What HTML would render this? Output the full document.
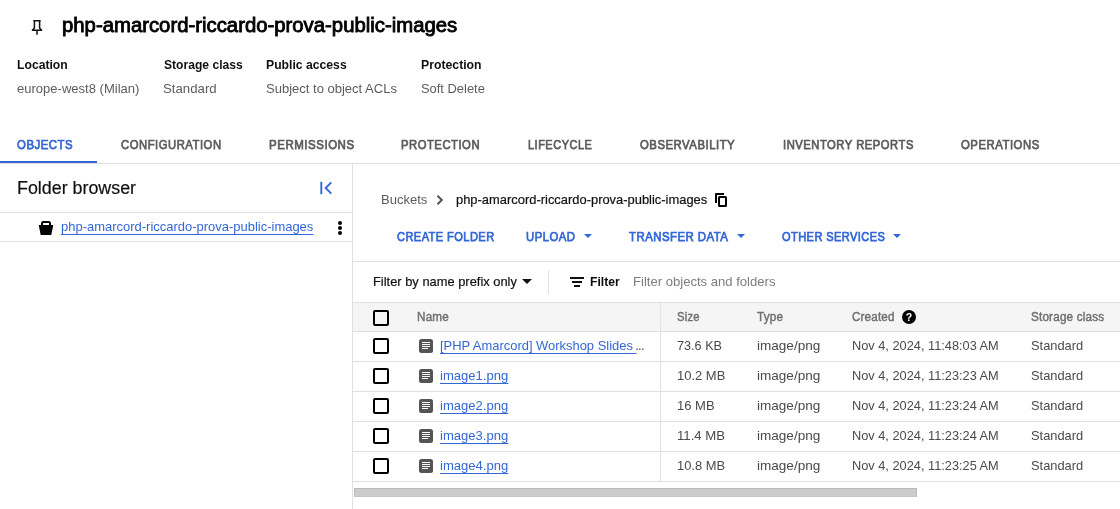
<!DOCTYPE html>
<html><head><meta charset="utf-8">
<style>
*{box-sizing:border-box;margin:0;padding:0}
html,body{width:1120px;height:509px;overflow:hidden;background:#fff}
body{font-family:"Liberation Sans",sans-serif;font-size:13px;color:#202124;position:relative}
.a{position:absolute;white-space:nowrap;line-height:1;transform-origin:0 50%}
.b{font-weight:bold}
.m{-webkit-text-stroke:0.85px currentColor}
.m2{-webkit-text-stroke:0.75px currentColor}
.m3{-webkit-text-stroke:0.45px currentColor}
.m4{-webkit-text-stroke:0.2px currentColor}
.ln{position:absolute;background:#e0e0e0}
.u{text-decoration:underline;text-decoration-thickness:1px;text-underline-offset:3px}
.cb{position:absolute;left:373px;width:16px;height:16px;border:2px solid #000;border-radius:2px}
svg{position:absolute;overflow:visible}
</style></head><body><div style="position:absolute;left:0;top:0;width:1120px;height:509px;will-change:transform">
<!-- pin -->
<svg style="left:30px;top:18px" width="14" height="18" viewBox="0 0 14 18"><path d="M3.300 2.800h7.400M4.400 2.800V10L2.400 12.300H11.600L9.600 10V2.800M7 12.300V16.800" fill="none" stroke="#111" stroke-width="1.500" stroke-linejoin="round"/></svg>

<!-- tabs lines -->
<div class="ln" style="left:0;top:163px;width:1120px;height:1px"></div>
<div class="ln" style="left:0;top:161px;width:97px;height:2px;background:#3367d6"></div>

<!-- folder browser -->
<svg style="left:319px;top:181px" width="14" height="14" viewBox="0 0 14 14"><path d="M2.300 0.700v12.600M12.300 1.300L6.600 7l5.700 5.700" fill="none" stroke="#3367d6" stroke-width="1.900"/></svg>
<div class="ln" style="left:0;top:212px;width:352px;height:1px"></div>
<svg style="left:38px;top:220px" width="16" height="16" viewBox="0 0 16 16"><path d="M4 6V3.300Q4 2 5.300 2H10.700Q12 2 12 3.300V6" fill="none" stroke="#000" stroke-width="2"/><path d="M1.200 4.900H14.800Q15.300 4.900 15.200 5.400L13.400 14.400Q13.300 15 12.700 15H3.300Q2.700 15 2.600 14.400L0.800 5.400Q0.700 4.900 1.200 4.900Z" fill="#000"/></svg>
<svg style="left:338px;top:221px" width="4" height="14" viewBox="0 0 4 14"><circle cx="2" cy="2.100" r="2"/><circle cx="2" cy="7" r="2"/><circle cx="2" cy="11.900" r="2"/></svg>
<div class="ln" style="left:0;top:241px;width:352px;height:1px"></div>
<div class="ln" style="left:352px;top:164px;width:1px;height:345px"></div>

<!-- breadcrumb -->
<svg style="left:436px;top:195px" width="8" height="10" viewBox="0 0 8 10"><path d="M1.500 0.700L5.800 5l-4.300 4.300" fill="none" stroke="#555" stroke-width="2"/></svg>
<svg style="left:715px;top:193px" width="12" height="14" viewBox="0 0 12 14"><path d="M1 10V1h8" fill="none" stroke="#000" stroke-width="2" stroke-linejoin="round"/><rect x="4" y="4" width="7" height="9" rx="0.500" fill="none" stroke="#000" stroke-width="2" stroke-linejoin="round"/></svg>

<!-- action carets -->
<svg style="left:584px;top:234px" width="8" height="4" viewBox="0 0 8 4"><path d="M0 0h8L4 4z" fill="#3367d6"/></svg>
<svg style="left:737px;top:234px" width="8" height="4" viewBox="0 0 8 4"><path d="M0 0h8L4 4z" fill="#3367d6"/></svg>
<svg style="left:893px;top:234px" width="8" height="4" viewBox="0 0 8 4"><path d="M0 0h8L4 4z" fill="#3367d6"/></svg>
<div class="ln" style="left:353px;top:261px;width:767px;height:1px"></div>

<!-- filter -->
<svg style="left:522px;top:279px" width="10" height="5" viewBox="0 0 10 5"><path d="M0 0h10L5 5z" fill="#111"/></svg>
<div class="ln" style="left:548px;top:270px;width:1px;height:24px"></div>
<svg style="left:570px;top:277px" width="14" height="10" viewBox="0 0 14 10"><rect x="0" y="0" width="14" height="2" fill="#111"/><rect x="2" y="4" width="10" height="2" fill="#111"/><rect x="4" y="8" width="6" height="2" fill="#111"/></svg>

<!-- table -->
<div style="position:absolute;left:353px;top:302px;width:767px;height:29px;background:#f5f5f5"></div>
<div class="ln" style="left:353px;top:302px;width:767px;height:1px"></div>
<div class="ln" style="left:353px;top:331px;width:767px;height:1px"></div>
<div class="ln" style="left:353px;top:361px;width:767px;height:1px"></div>
<div class="ln" style="left:353px;top:391px;width:767px;height:1px"></div>
<div class="ln" style="left:353px;top:421px;width:767px;height:1px"></div>
<div class="ln" style="left:353px;top:451px;width:767px;height:1px"></div>
<div class="ln" style="left:353px;top:481px;width:767px;height:1px"></div>
<div class="ln" style="left:660px;top:302px;width:1px;height:179px"></div>

<div class="cb" style="top:310px"></div>
<div class="cb" style="top:338px"></div>
<div class="cb" style="top:368px"></div>
<div class="cb" style="top:398px"></div>
<div class="cb" style="top:428px"></div>
<div class="cb" style="top:458px"></div>

<svg style="left:419px;top:339px" width="14" height="14" viewBox="0 0 14 14"><rect width="14" height="14" rx="2.500" fill="#555"/><path d="M3 3.500h8M3 5.500h8M3 7.500h8M3 9.500h6" stroke="#fff" stroke-width="1.100" fill="none"/></svg>
<svg style="left:419px;top:369px" width="14" height="14" viewBox="0 0 14 14"><rect width="14" height="14" rx="2.500" fill="#555"/><path d="M3 3.500h8M3 5.500h8M3 7.500h8M3 9.500h6" stroke="#fff" stroke-width="1.100" fill="none"/></svg>
<svg style="left:419px;top:399px" width="14" height="14" viewBox="0 0 14 14"><rect width="14" height="14" rx="2.500" fill="#555"/><path d="M3 3.500h8M3 5.500h8M3 7.500h8M3 9.500h6" stroke="#fff" stroke-width="1.100" fill="none"/></svg>
<svg style="left:419px;top:429px" width="14" height="14" viewBox="0 0 14 14"><rect width="14" height="14" rx="2.500" fill="#555"/><path d="M3 3.500h8M3 5.500h8M3 7.500h8M3 9.500h6" stroke="#fff" stroke-width="1.100" fill="none"/></svg>
<svg style="left:419px;top:459px" width="14" height="14" viewBox="0 0 14 14"><rect width="14" height="14" rx="2.500" fill="#555"/><path d="M3 3.500h8M3 5.500h8M3 7.500h8M3 9.500h6" stroke="#fff" stroke-width="1.100" fill="none"/></svg>

<!-- help icon -->
<svg style="left:902px;top:310px" width="14" height="14" viewBox="0 0 14 14"><circle cx="7" cy="7" r="7" fill="#000"/><text x="7" y="10.800" font-size="10.500" font-weight="bold" fill="#fff" text-anchor="middle" font-family="Liberation Sans, sans-serif">?</text></svg>

<!-- scrollbar -->
<div style="position:absolute;left:354px;top:488px;width:563px;height:9px;background:#ccc;border:1px solid #b8b8b8;border-bottom-color:#c6c6c6"></div>

<!-- ellipsis -->
<div class="a" style="left:635.3px;top:339px;font-size:13px;color:#4a4a4a;letter-spacing:-0.8px">...</div>

<div class="a m" id="title" style="left:61.7px;top:15px;font-size:20px;color:#000;transform:scaleX(1.0158);">php-amarcord-riccardo-prova-public-images</div>
<div class="a b" id="l1" style="left:16.5px;top:58px;font-size:13px;color:#111;transform:scaleX(0.9371);">Location</div>
<div class="a b" id="l2" style="left:163.7px;top:58px;font-size:13px;color:#111;transform:scaleX(0.9312);">Storage class</div>
<div class="a b" id="l3" style="left:265.6px;top:58px;font-size:13px;color:#111;transform:scaleX(0.9381);">Public access</div>
<div class="a b" id="l4" style="left:420.7px;top:58px;font-size:13px;color:#111;transform:scaleX(0.9425);">Protection</div>
<div class="a" id="v1" style="left:16.5px;top:82px;font-size:13px;color:#5c5c5c;transform:scaleX(1.0026);">europe-west8 (Milan)</div>
<div class="a" id="v2" style="left:162.6px;top:82px;font-size:13px;color:#5c5c5c;transform:scaleX(1.0164);">Standard</div>
<div class="a" id="v3" style="left:265.6px;top:82px;font-size:13px;color:#5c5c5c;transform:scaleX(1.0010);">Subject to object ACLs</div>
<div class="a" id="v4" style="left:420.6px;top:82px;font-size:13px;color:#5c5c5c;transform:scaleX(0.9922);">Soft Delete</div>
<div class="a m2" id="t0" style="left:16.5px;top:138px;font-size:13px;color:#3367d6;letter-spacing:0.60px;transform:scaleX(0.8756);">OBJECTS</div>
<div class="a m2" id="t1" style="left:120.5px;top:138px;font-size:13px;color:#5c5c5c;letter-spacing:0.60px;transform:scaleX(0.8677);">CONFIGURATION</div>
<div class="a m2" id="t2" style="left:268.5px;top:138px;font-size:13px;color:#5c5c5c;letter-spacing:0.60px;transform:scaleX(0.8836);">PERMISSIONS</div>
<div class="a m2" id="t3" style="left:400.6px;top:138px;font-size:13px;color:#5c5c5c;letter-spacing:0.60px;transform:scaleX(0.8664);">PROTECTION</div>
<div class="a m2" id="t4" style="left:527.5px;top:138px;font-size:13px;color:#5c5c5c;letter-spacing:0.60px;transform:scaleX(0.8440);">LIFECYCLE</div>
<div class="a m2" id="t5" style="left:639.5px;top:138px;font-size:13px;color:#5c5c5c;letter-spacing:0.60px;transform:scaleX(0.8718);">OBSERVABILITY</div>
<div class="a m2" id="t6" style="left:782.5px;top:138px;font-size:13px;color:#5c5c5c;letter-spacing:0.60px;transform:scaleX(0.8636);">INVENTORY REPORTS</div>
<div class="a m2" id="t7" style="left:960.5px;top:138px;font-size:13px;color:#5c5c5c;letter-spacing:0.60px;transform:scaleX(0.8721);">OPERATIONS</div>
<div class="a m4" id="fb" style="left:16.7px;top:179px;font-size:18px;color:#111;transform:scaleX(0.9919);">Folder browser</div>
<div class="a u" id="fl" style="left:60.5px;top:220px;font-size:13px;color:#3367d6;transform:scaleX(0.9978);">php-amarcord-riccardo-prova-public-images</div>
<div class="a" id="bc1" style="left:380.5px;top:193px;font-size:13px;color:#5c5c5c;transform:scaleX(1.0022);">Buckets</div>
<div class="a m4" id="bc2" style="left:455.6px;top:193px;font-size:13px;color:#111;transform:scaleX(0.9936);">php-amarcord-riccardo-prova-public-images</div>
<div class="a m2" id="a1" style="left:396.7px;top:230px;font-size:13px;color:#3367d6;letter-spacing:0.50px;transform:scaleX(0.8512);">CREATE FOLDER</div>
<div class="a m2" id="a2" style="left:525.6px;top:230px;font-size:13px;color:#3367d6;letter-spacing:0.50px;transform:scaleX(0.8728);">UPLOAD</div>
<div class="a m2" id="a3" style="left:628.7px;top:230px;font-size:13px;color:#3367d6;letter-spacing:0.50px;transform:scaleX(0.8806);">TRANSFER DATA</div>
<div class="a m2" id="a4" style="left:781.6px;top:230px;font-size:13px;color:#3367d6;letter-spacing:0.50px;transform:scaleX(0.8496);">OTHER SERVICES</div>
<div class="a m4" id="f1" style="left:372.7px;top:275px;font-size:13px;color:#111;transform:scaleX(0.9910);">Filter by name prefix only</div>
<div class="a b" id="f2" style="left:589.7px;top:275px;font-size:13px;color:#0a0a0a;transform:scaleX(0.9337);">Filter</div>
<div class="a" id="f3" style="left:632.6px;top:275px;font-size:13px;color:#7d7d7d;transform:scaleX(1.0058);">Filter objects and folders</div>
<div class="a m3" id="h1" style="left:416.5px;top:311px;font-size:12px;color:#707070;letter-spacing:0.20px;transform:scaleX(0.9731);">Name</div>
<div class="a m3" id="h2" style="left:676.7px;top:311px;font-size:12px;color:#707070;letter-spacing:0.20px;transform:scaleX(0.9378);">Size</div>
<div class="a m3" id="h3" style="left:756.5px;top:311px;font-size:12px;color:#707070;letter-spacing:0.20px;transform:scaleX(0.9718);">Type</div>
<div class="a m3" id="h4" style="left:851.7px;top:311px;font-size:12px;color:#707070;letter-spacing:0.20px;transform:scaleX(0.9657);">Created</div>
<div class="a m3" id="h5" style="left:1030.6px;top:311px;font-size:12px;color:#707070;letter-spacing:0.20px;transform:scaleX(0.9731);">Storage class</div>
<div class="a u" id="n0" style="left:439.7px;top:339px;font-size:13px;color:#3367d6;transform:scaleX(0.9949);">[PHP Amarcord] Workshop Slides </div>
<div class="a" id="s0" style="left:676.5px;top:339px;font-size:13px;color:#4a4a4a;transform:scaleX(0.9731);">73.6 KB</div>
<div class="a" id="ty0" style="left:756.7px;top:339px;font-size:13px;color:#4a4a4a;transform:scaleX(1.0425);">image/png</div>
<div class="a" id="d0" style="left:851.5px;top:339px;font-size:13px;color:#4a4a4a;transform:scaleX(0.9826);">Nov 4, 2024, 11:48:03 AM</div>
<div class="a" id="sc0" style="left:1030.5px;top:339px;font-size:13px;color:#4a4a4a;transform:scaleX(0.9889);">Standard</div>
<div class="a u" id="n1" style="left:439.6px;top:369px;font-size:13px;color:#3367d6;transform:scaleX(1.0053);">image1.png</div>
<div class="a" id="s1" style="left:676.7px;top:369px;font-size:13px;color:#4a4a4a;transform:scaleX(0.9982);">10.2 MB</div>
<div class="a" id="ty1" style="left:756.7px;top:369px;font-size:13px;color:#4a4a4a;transform:scaleX(1.0425);">image/png</div>
<div class="a" id="d1" style="left:851.5px;top:369px;font-size:13px;color:#4a4a4a;transform:scaleX(0.9826);">Nov 4, 2024, 11:23:23 AM</div>
<div class="a" id="sc1" style="left:1030.5px;top:369px;font-size:13px;color:#4a4a4a;transform:scaleX(0.9889);">Standard</div>
<div class="a u" id="n2" style="left:439.6px;top:399px;font-size:13px;color:#3367d6;transform:scaleX(1.0053);">image2.png</div>
<div class="a" id="s2" style="left:676.7px;top:399px;font-size:13px;color:#4a4a4a;transform:scaleX(1.0006);">16 MB</div>
<div class="a" id="ty2" style="left:756.7px;top:399px;font-size:13px;color:#4a4a4a;transform:scaleX(1.0425);">image/png</div>
<div class="a" id="d2" style="left:851.5px;top:399px;font-size:13px;color:#4a4a4a;transform:scaleX(0.9826);">Nov 4, 2024, 11:23:24 AM</div>
<div class="a" id="sc2" style="left:1030.5px;top:399px;font-size:13px;color:#4a4a4a;transform:scaleX(0.9889);">Standard</div>
<div class="a u" id="n3" style="left:439.6px;top:429px;font-size:13px;color:#3367d6;transform:scaleX(1.0052);">image3.png</div>
<div class="a" id="s3" style="left:676.7px;top:429px;font-size:13px;color:#4a4a4a;transform:scaleX(1.0141);">11.4 MB</div>
<div class="a" id="ty3" style="left:756.7px;top:429px;font-size:13px;color:#4a4a4a;transform:scaleX(1.0425);">image/png</div>
<div class="a" id="d3" style="left:851.5px;top:429px;font-size:13px;color:#4a4a4a;transform:scaleX(0.9826);">Nov 4, 2024, 11:23:24 AM</div>
<div class="a" id="sc3" style="left:1030.5px;top:429px;font-size:13px;color:#4a4a4a;transform:scaleX(0.9889);">Standard</div>
<div class="a u" id="n4" style="left:439.6px;top:459px;font-size:13px;color:#3367d6;transform:scaleX(1.0053);">image4.png</div>
<div class="a" id="s4" style="left:676.7px;top:459px;font-size:13px;color:#4a4a4a;transform:scaleX(0.9934);">10.8 MB</div>
<div class="a" id="ty4" style="left:756.7px;top:459px;font-size:13px;color:#4a4a4a;transform:scaleX(1.0425);">image/png</div>
<div class="a" id="d4" style="left:851.5px;top:459px;font-size:13px;color:#4a4a4a;transform:scaleX(0.9826);">Nov 4, 2024, 11:23:25 AM</div>
<div class="a" id="sc4" style="left:1030.5px;top:459px;font-size:13px;color:#4a4a4a;transform:scaleX(0.9889);">Standard</div>
</div></body></html>
